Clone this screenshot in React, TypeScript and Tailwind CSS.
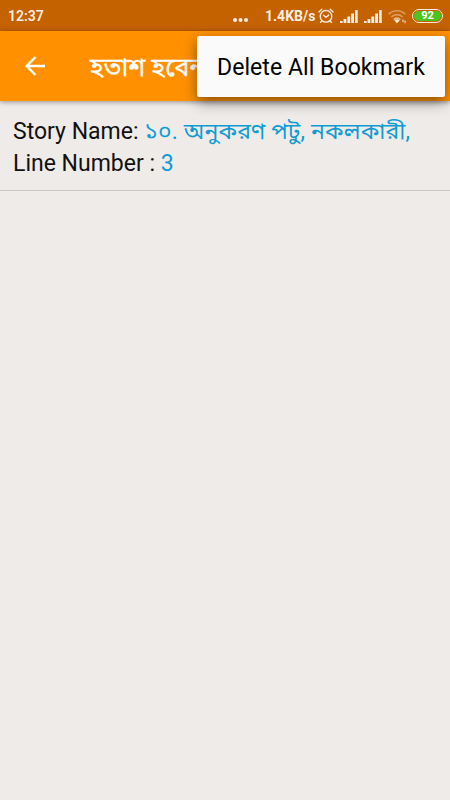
import { clsx } from 'clsx';

interface Bookmark {
    id: number;
    storyName: string;
    line: number;
}

const BOOKMARKS: Bookmark[] = [
    { id: 1, storyName: '১০. অনুকরণ পটু, নকলকারী,', line: 3 },
];

function SignalIcon({ className }: { className?: string }) {
    return (
        <svg viewBox="0 0 18 13" className={clsx('h-[13px] w-[18px] shrink-0', className)} fill="#fdeee2">
            <rect x="0" y="11" width="2.6" height="2" />
            <rect x="3.6" y="9" width="2.8" height="4" />
            <rect x="7.4" y="6.5" width="2.8" height="6.5" />
            <rect x="11.2" y="3.5" width="2.8" height="9.5" />
            <rect x="15.1" y="0" width="2.6" height="13" />
        </svg>
    );
}

function AlarmIcon() {
    return (
        <svg viewBox="0 0 16 16" className="h-4 w-4 shrink-0" fill="none" stroke="#fbe9dc" strokeWidth="1.4" strokeLinecap="round">
            <circle cx="8" cy="8.3" r="5.8" />
            <path d="M.9 3.9 3.8 1.3M15.1 3.9l-2.9-2.6M3.9 12.9l-1.3 1.4M12.1 12.9l1.3 1.4" />
            <path d="M5.5 7.3 8 9.3l2.7-2.2" strokeLinejoin="round" />
        </svg>
    );
}

function WifiIcon() {
    return (
        <svg viewBox="0 0 19 15" className="h-[15px] w-[19px] shrink-0" fill="none" strokeWidth="1.7">
            <path d="M.8 5.2a11.5 11.5 0 0 1 16.4 0" stroke="#db9a66" />
            <path d="M3.3 8a8 8 0 0 1 11.4 0" stroke="#db9a66" />
            <path d="M5.7 10.6a4.6 4.6 0 0 1 6.6 0" stroke="#e8b78f" />
            <path d="M9 14.3 6.4 11.5a3.7 3.7 0 0 1 5.2 0z" fill="#fff3e8" />
            <path d="M15 13v-2.6M17 11.6v2.6" stroke="#f2d2b8" strokeWidth="1.2" />
        </svg>
    );
}

function StatusBar() {
    return (
        <div className="flex h-[31px] items-center bg-[#c46200] pt-px text-[#fdeee2]">
            <span className="ml-[8px] w-[225px] text-[14px] font-semibold">12:37</span>
            <svg viewBox="0 0 15 4" className="mt-[7px] h-1 w-[15px]" fill="currentColor">
                <circle cx="2" cy="2" r="2" />
                <circle cx="7.5" cy="2" r="2" />
                <circle cx="13" cy="2" r="2" />
            </svg>
            <span className="ml-[17px] w-[53px] whitespace-nowrap text-[14px] font-bold">1.4KB/s</span>
            <AlarmIcon />
            <SignalIcon className="ml-[6px]" />
            <SignalIcon className="ml-[6px]" />
            <span className="ml-[6px]"><WifiIcon /></span>
            <div className="mb-px ml-[5px] flex h-[14px] w-[31px] items-center justify-center rounded-full border border-[#fbe9dc] p-px">
                <span className="flex h-full w-full items-center justify-center rounded-full bg-[#4cc41c] text-[11px] leading-none font-bold text-white">92</span>
            </div>
        </div>
    );
}

export default function App() {
    return (
        <div className="relative min-h-[800px] w-[450px] overflow-hidden bg-[#efebe8] font-['Roboto','Noto_Sans_Bengali','Noto_Sans',sans-serif]">
            <StatusBar />

            <header className="relative flex h-[70px] items-center bg-[#ff9100] text-white shadow-[0_1px_5px_rgba(0,0,0,0.4)]">
                <svg viewBox="0 0 20 20" className="ml-[25px] h-5 w-5" fill="none" stroke="currentColor" strokeWidth="2.4">
                    <path d="M20 10H2M10.5 1 1.7 10l8.8 9" />
                </svg>
                <h1 className="mt-[3px] ml-[45px] whitespace-nowrap text-[25.3px] leading-none font-normal [-webkit-text-stroke:0.3px_white]">হতাশ হবেন</h1>
            </header>

            <ul>
                {BOOKMARKS.map(bookmark => (
                    <li key={bookmark.id} className="h-[90px] border-b border-[#cbc7c4] pt-[15px] pl-[13px] text-[23px] leading-[32px] text-[#111]">
                        <p className="whitespace-nowrap">
                            Story Name: <span className="tracking-[0.14px] text-[#109bd2]">{bookmark.storyName}</span>
                        </p>
                        <p>
                            Line Number : <span className="text-[#109bd2]">{bookmark.line}</span>
                        </p>
                    </li>
                ))}
            </ul>

            {/* Overflow menu */}
            <div className="absolute top-[36px] right-[5px] flex h-[61px] w-[248px] items-center rounded-[2px] bg-[#fafafa] pt-[3px] pl-[20px] shadow-[0_5px_14px_rgba(0,0,0,0.45)]">
                <button className="whitespace-nowrap text-[23px] tracking-[0.06px] text-black">Delete All Bookmark</button>
            </div>
        </div>
    );
}
